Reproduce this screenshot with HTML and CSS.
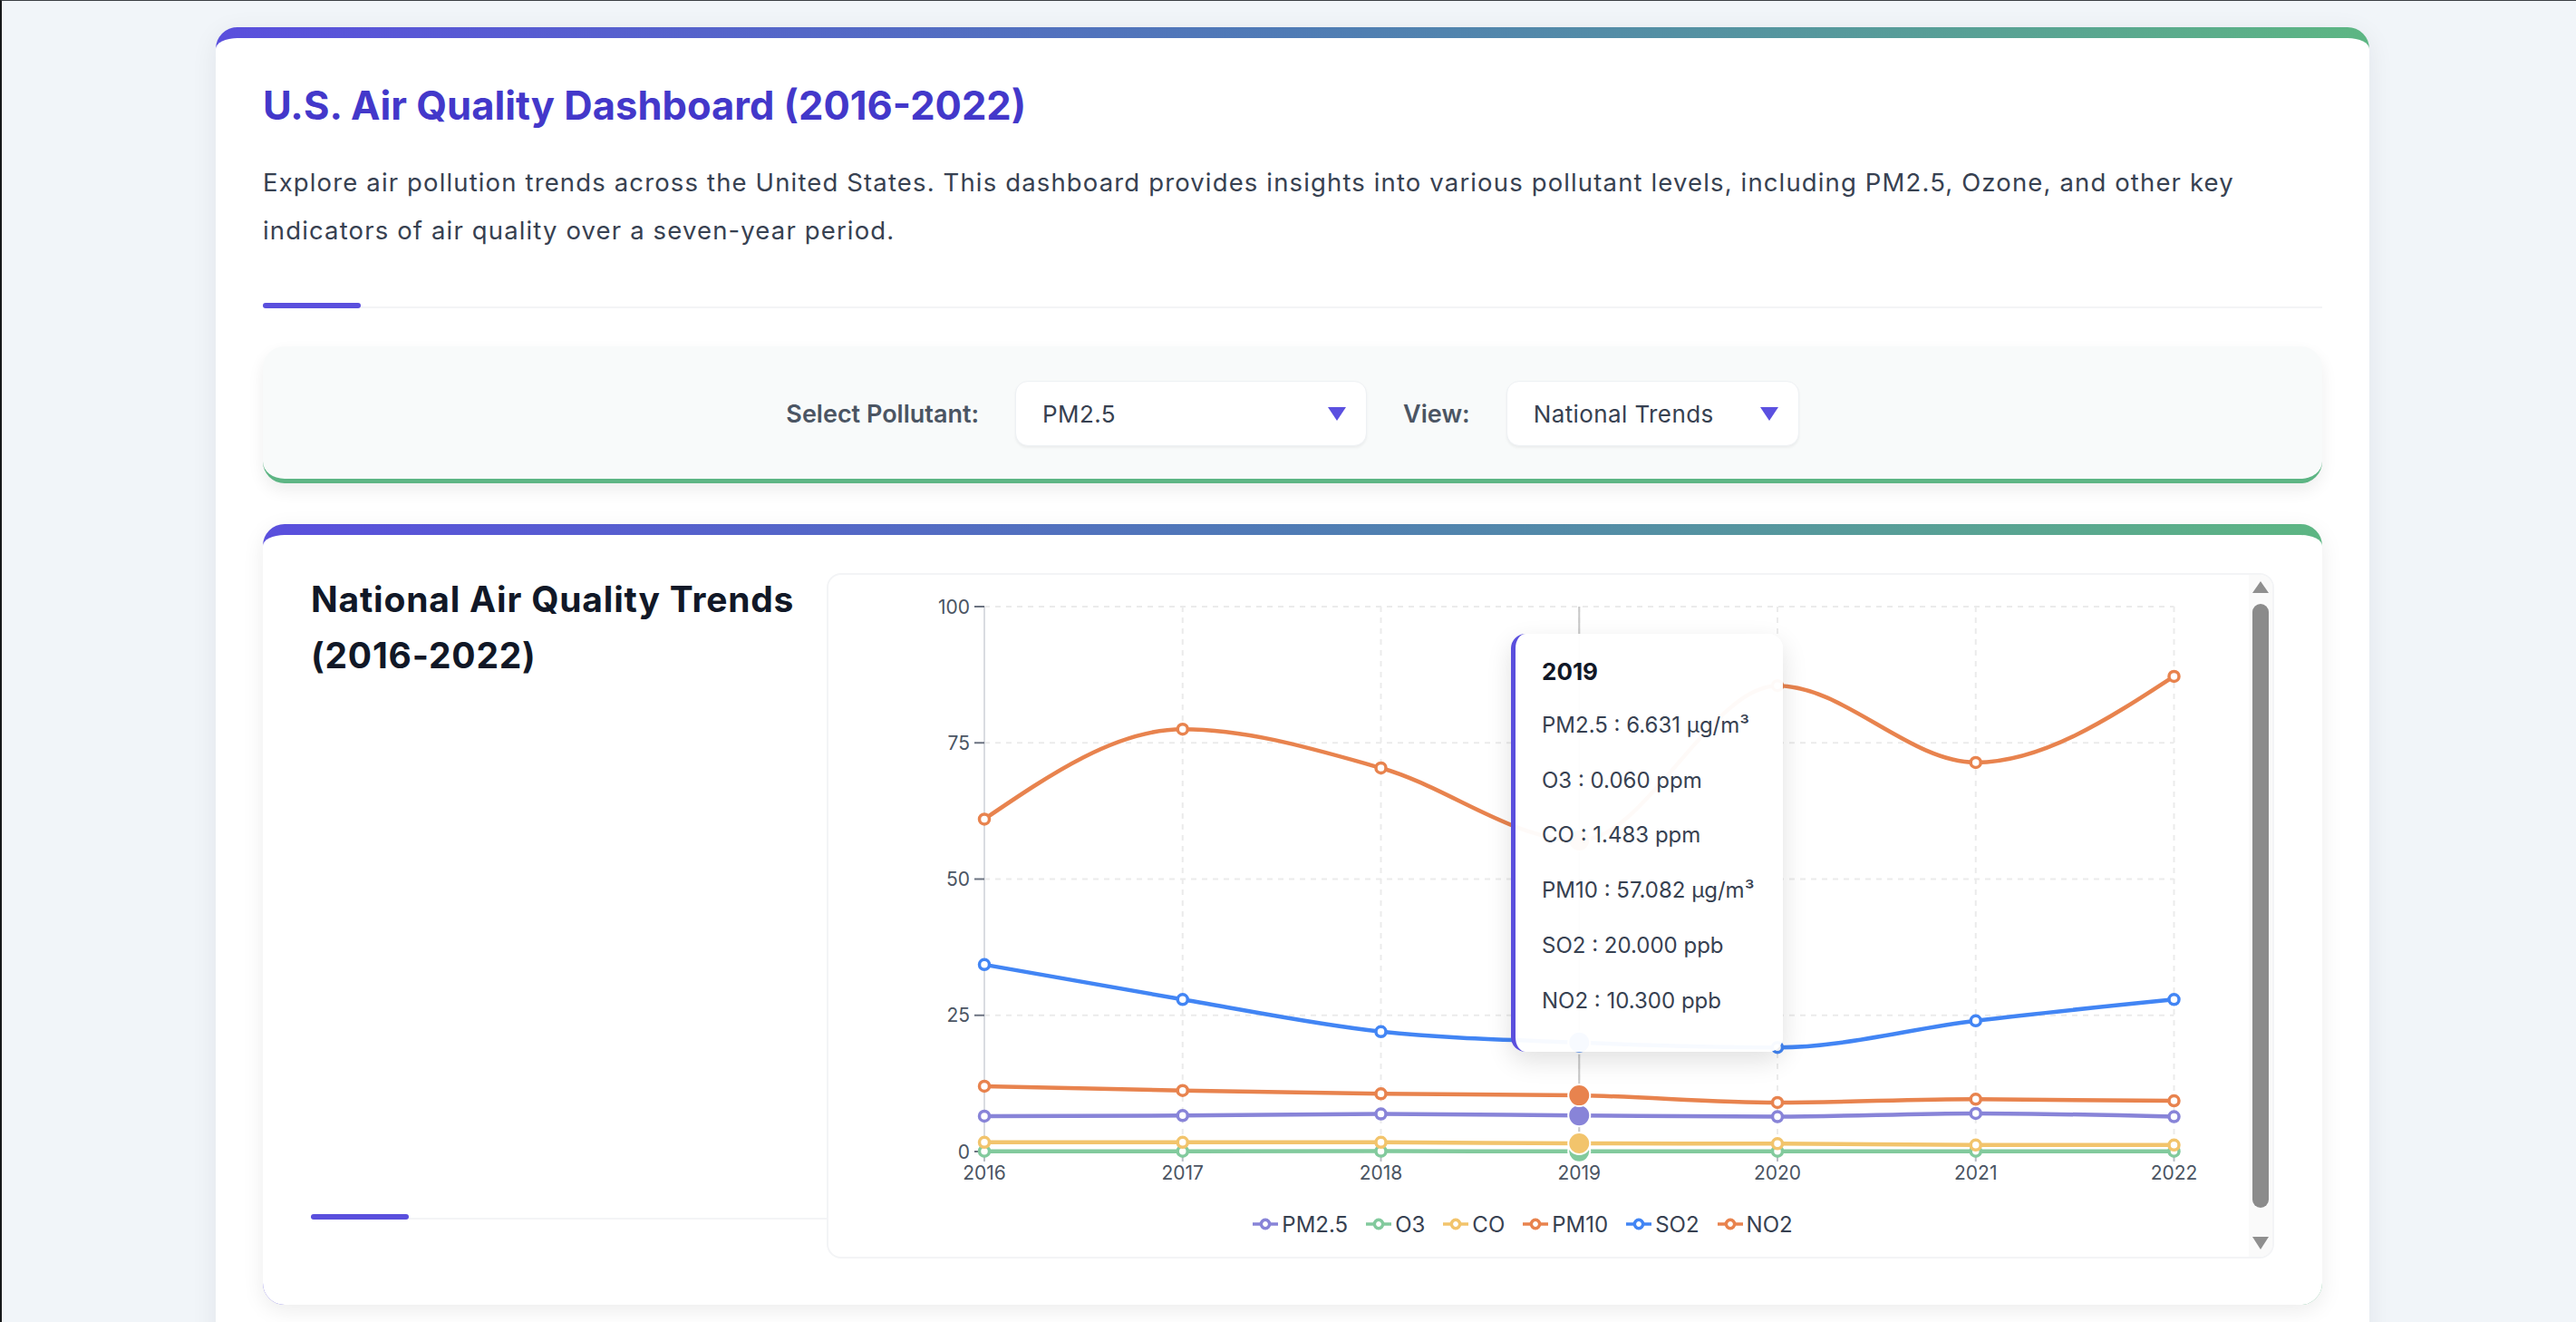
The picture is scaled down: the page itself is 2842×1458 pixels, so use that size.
FILE: index.html
```html
<!DOCTYPE html>
<html lang="en">
<head>
<meta charset="utf-8">
<title>U.S. Air Quality Dashboard (2016-2022)</title>
<link rel="stylesheet" href="styles.css">
</head>
<body>
<main class="page">
  <section class="dashboard">
    <h1 class="dash-title">U.S. Air Quality Dashboard (2016-2022)</h1>
    <p class="dash-intro">Explore air pollution trends across the United States. This dashboard provides insights into various pollutant levels, including PM2.5, Ozone, and other key<br>indicators of air quality over a seven-year period.</p>
    <div class="divider"><span class="divider-bar"></span><span class="divider-line"></span></div>

    <div class="controls">
      <span class="control-label">Select Pollutant:</span>
      <div class="select select-pollutant"><span>PM2.5</span><span class="caret"></span></div>
      <span class="control-label">View:</span>
      <div class="select select-view"><span>National Trends</span><span class="caret"></span></div>
    </div>

    <section class="chart-card">
      <div class="chart-side">
        <h2 class="chart-title">National Air Quality Trends (2016-2022)</h2>
        <div class="divider"><span class="divider-bar"></span><span class="divider-line"></span></div>
      </div>

      <div class="chart-box">
        <div class="chart-main">
          <svg class="chart-svg" width="1567" height="696" viewBox="0 0 1567 696">
            <g class="grid">
              <line x1="172" y1="35" x2="1484.5" y2="35"/>
              <line x1="172" y1="185.25" x2="1484.5" y2="185.25"/>
              <line x1="172" y1="335.5" x2="1484.5" y2="335.5"/>
              <line x1="172" y1="485.75" x2="1484.5" y2="485.75"/>
              <line x1="172" y1="636" x2="1484.5" y2="636"/>
              <line x1="172" y1="35" x2="172" y2="636"/>
              <line x1="390.75" y1="35" x2="390.75" y2="636"/>
              <line x1="609.5" y1="35" x2="609.5" y2="636"/>
              <line x1="828.25" y1="35" x2="828.25" y2="636"/>
              <line x1="1047" y1="35" x2="1047" y2="636"/>
              <line x1="1265.75" y1="35" x2="1265.75" y2="636"/>
              <line x1="1484.5" y1="35" x2="1484.5" y2="636"/>
            </g>
            <g class="axis-line">
              <line x1="172" y1="35" x2="172" y2="636"/>
              <line x1="172" y1="636" x2="1484.5" y2="636"/>
            </g>
            <g class="y-ticks">
              <line x1="161" y1="35" x2="172" y2="35"/>
              <line x1="161" y1="185.25" x2="172" y2="185.25"/>
              <line x1="161" y1="335.5" x2="172" y2="335.5"/>
              <line x1="161" y1="485.75" x2="172" y2="485.75"/>
              <line x1="161" y1="636" x2="172" y2="636"/>
            </g>
            <g class="x-ticks">
              <line x1="172" y1="636" x2="172" y2="647"/>
              <line x1="390.75" y1="636" x2="390.75" y2="647"/>
              <line x1="609.5" y1="636" x2="609.5" y2="647"/>
              <line x1="828.25" y1="636" x2="828.25" y2="647"/>
              <line x1="1047" y1="636" x2="1047" y2="647"/>
              <line x1="1265.75" y1="636" x2="1265.75" y2="647"/>
              <line x1="1484.5" y1="636" x2="1484.5" y2="647"/>
            </g>
            <g class="y-labels">
              <text x="156" y="42.5">100</text>
              <text x="156" y="192.75">75</text>
              <text x="156" y="343">50</text>
              <text x="156" y="493.25">25</text>
              <text x="156" y="643.5">0</text>
            </g>
            <g class="x-labels">
              <text x="172" y="667">2016</text>
              <text x="390.75" y="667">2017</text>
              <text x="609.5" y="667">2018</text>
              <text x="828.25" y="667">2019</text>
              <text x="1047" y="667">2020</text>
              <text x="1265.75" y="667">2021</text>
              <text x="1484.5" y="667">2022</text>
            </g>
            <line class="cursor" x1="828.25" y1="35" x2="828.25" y2="636"/>
            <g id="series"></g>
          </svg>

          <div class="legend">
            <span class="legend-item"><svg class="legend-icon" viewBox="0 0 32 32"><path stroke="#8884d8" d="M0,16h10.67A5.33,5.33,0,1,1,21.33,16H32M21.33,16A5.33,5.33,0,1,1,10.67,16"/></svg>PM2.5</span>
            <span class="legend-item"><svg class="legend-icon" viewBox="0 0 32 32"><path stroke="#82ca9d" d="M0,16h10.67A5.33,5.33,0,1,1,21.33,16H32M21.33,16A5.33,5.33,0,1,1,10.67,16"/></svg>O3</span>
            <span class="legend-item"><svg class="legend-icon" viewBox="0 0 32 32"><path stroke="#f2c46c" d="M0,16h10.67A5.33,5.33,0,1,1,21.33,16H32M21.33,16A5.33,5.33,0,1,1,10.67,16"/></svg>CO</span>
            <span class="legend-item"><svg class="legend-icon" viewBox="0 0 32 32"><path stroke="#e8834e" d="M0,16h10.67A5.33,5.33,0,1,1,21.33,16H32M21.33,16A5.33,5.33,0,1,1,10.67,16"/></svg>PM10</span>
            <span class="legend-item"><svg class="legend-icon" viewBox="0 0 32 32"><path stroke="#4285f4" d="M0,16h10.67A5.33,5.33,0,1,1,21.33,16H32M21.33,16A5.33,5.33,0,1,1,10.67,16"/></svg>SO2</span>
            <span class="legend-item"><svg class="legend-icon" viewBox="0 0 32 32"><path stroke="#e8834e" d="M0,16h10.67A5.33,5.33,0,1,1,21.33,16H32M21.33,16A5.33,5.33,0,1,1,10.67,16"/></svg>NO2</span>
          </div>
        </div>

        <div class="scrollbar">
          <span class="scroll-up"></span>
          <span class="scroll-thumb"></span>
          <span class="scroll-down"></span>
        </div>

        <div class="tooltip">
          <div class="tooltip-title">2019</div>
          <div class="tooltip-item">PM2.5 : 6.631 µg/m³</div>
          <div class="tooltip-item">O3 : 0.060 ppm</div>
          <div class="tooltip-item">CO : 1.483 ppm</div>
          <div class="tooltip-item">PM10 : 57.082 µg/m³</div>
          <div class="tooltip-item">SO2 : 20.000 ppb</div>
          <div class="tooltip-item">NO2 : 10.300 ppb</div>
        </div>
      </div>
    </section>
  </section>
</main>
<script src="script.js"></script>
</body>
</html>
```

FILE: styles.css
```css
* { box-sizing: border-box; }

html {
  background: #f1f5f9;
  border-top: 1px solid #3b4045;
  border-left: 2px solid #16181a;
}

body {
  margin: 0;
  background: #f1f5f9;
  font-family: Inter, "Noto Sans", "DejaVu Sans", sans-serif;
  color: #374151;
}

.page {
  width: 2376px;
  margin: 29px 0 0 236px;
}

.dashboard {
  border-top: 12px solid transparent;
  border-radius: 24px;
  background:
    linear-gradient(#ffffff, #ffffff) padding-box,
    linear-gradient(90deg, #5a4fdd, #4f7bb5 50%, #5db683) border-box;
  box-shadow: 0 6px 30px rgba(15, 23, 42, 0.07);
  padding: 46px 52px 200px;
}

.dash-title {
  margin: 0;
  font-size: 43.5px;
  line-height: 56px;
  font-weight: 700;
  color: #4338ca;
}

.dash-intro {
  margin: 31px 0 0;
  font-size: 27.5px;
  line-height: 53px;
  letter-spacing: 1.14px;
  color: #374151;
}

.divider {
  display: flex;
  align-items: flex-end;
  height: 6px;
  margin-top: 53px;
}

.divider-bar {
  flex: none;
  width: 108px;
  height: 6px;
  border-radius: 3px;
  background: #5a4fdd;
}

.divider-line {
  flex: 1;
  height: 2px;
  background: #f3f4f6;
}

.controls {
  margin-top: 42px;
  display: flex;
  justify-content: center;
  align-items: center;
  gap: 40px;
  padding: 38px 0 36px;
  background: #f8fafa;
  border-radius: 24px;
  border-bottom: 5px solid #5db584;
  box-shadow: 0 8px 18px rgba(0, 0, 0, 0.07);
}

.control-label {
  font-size: 27px;
  font-weight: 600;
  color: #4b5563;
}

.select {
  display: flex;
  align-items: center;
  justify-content: space-between;
  height: 72px;
  padding: 0 22px 0 29px;
  background: #ffffff;
  border: 1px solid #eef1f4;
  border-radius: 14px;
  box-shadow: 0 2px 3px rgba(0, 0, 0, 0.05);
  font-size: 26px;
  letter-spacing: 0.4px;
  color: #374151;
}

.select-pollutant { width: 388px; }
.select-view { width: 323px; }

.caret {
  width: 0;
  height: 0;
  border-left: 10px solid transparent;
  border-right: 10px solid transparent;
  border-top: 15px solid #5b50e0;
}

.chart-card {
  margin-top: 45px;
  display: grid;
  grid-template-columns: 569px 1fr;
  padding: 40px 53px 51px;
  border-top: 12px solid transparent;
  border-radius: 24px;
  background:
    linear-gradient(#ffffff, #ffffff) padding-box,
    linear-gradient(90deg, #5a4fdd, #4f7bb5 50%, #5db683) border-box;
  box-shadow: 0 6px 24px rgba(0, 0, 0, 0.08);
}

.chart-side {
  display: flex;
  flex-direction: column;
  justify-content: space-between;
  padding-bottom: 43px;
}

.chart-title {
  margin: 0;
  font-size: 39px;
  line-height: 62px;
  letter-spacing: 0.8px;
  font-weight: 700;
  color: #111827;
}

.chart-side .divider { margin-top: 0; }

.chart-box {
  position: relative;
  margin-top: 2px;
  height: 756px;
  display: flex;
  background: #ffffff;
  border: 2px solid #f3f4f6;
  border-radius: 16px;
}

.chart-main {
  flex: 1;
  display: flex;
  flex-direction: column;
}

.chart-svg { display: block; }

.grid line {
  stroke: #ebebeb;
  stroke-width: 2;
  stroke-dasharray: 6 6;
}

.axis-line line {
  stroke: #d9dce1;
  stroke-width: 2;
}

.y-ticks line {
  stroke: #6b7280;
  stroke-width: 2;
}

.x-ticks line {
  stroke: #b8bcc4;
  stroke-width: 2;
}

.y-labels text {
  font-family: Inter, "Noto Sans", sans-serif;
  font-size: 21px;
  fill: #4b5563;
  text-anchor: end;
}

.x-labels text {
  font-family: Inter, "Noto Sans", sans-serif;
  font-size: 21px;
  fill: #4b5563;
  text-anchor: middle;
}

.cursor {
  stroke: #c8c8c8;
  stroke-width: 2;
}

.legend {
  height: 40px;
  display: flex;
  justify-content: center;
  align-items: center;
  gap: 20px;
  padding-right: 35px;
  font-size: 24px;
  color: #374151;
}

.legend-item {
  display: inline-flex;
  align-items: center;
  gap: 4px;
}

.legend-icon {
  width: 28px;
  height: 28px;
}

.legend-icon path {
  fill: none;
  stroke-width: 4;
}

.scrollbar {
  flex: none;
  width: 26px;
  display: flex;
  flex-direction: column;
  align-items: center;
  padding-top: 7px;
  background: #fafafa;
  border-radius: 0 14px 14px 0;
}

.scroll-up {
  width: 0;
  height: 0;
  border-left: 9px solid transparent;
  border-right: 9px solid transparent;
  border-bottom: 13px solid #8f8f8f;
}

.scroll-thumb {
  margin-top: 12px;
  width: 18px;
  height: 666px;
  border-radius: 9px;
  background: #8b8b8b;
}

.scroll-down {
  margin-top: 32px;
  width: 0;
  height: 0;
  border-left: 9px solid transparent;
  border-right: 9px solid transparent;
  border-top: 14px solid #8f8f8f;
}

.tooltip {
  position: absolute;
  left: 753px;
  top: 65px;
  width: 300px;
  padding: 22px 20px 26px 29px;
  background: rgba(255, 255, 255, 0.96);
  border-left: 5px solid #5a4fdd;
  border-radius: 16px;
  box-shadow: 0 10px 28px rgba(0, 0, 0, 0.12);
}

.tooltip-title {
  font-size: 26px;
  line-height: 40px;
  font-weight: 700;
  color: #111827;
  margin-bottom: 9px;
}

.tooltip-item {
  font-size: 24px;
  line-height: 60.7px;
  color: #374151;
  white-space: nowrap;
}
```

FILE: script.js
```js
(function () {
  var X0 = 172, STEP = 218.75, Y0 = 636, K = 6.01;
  var series = [
    { color: '#8884d8', data: [6.5, 6.6, 6.9, 6.631, 6.4, 7.0, 6.4] },
    { color: '#82ca9d', data: [0.062, 0.061, 0.063, 0.06, 0.061, 0.062, 0.061] },
    { color: '#f2c46c', data: [1.7, 1.7, 1.7, 1.483, 1.45, 1.2, 1.2] },
    { color: '#e8834e', data: [61.0, 77.5, 70.4, 57.082, 85.5, 71.4, 87.2] },
    { color: '#4285f4', data: [34.3, 27.9, 22.0, 20.0, 19.1, 24.0, 27.9] },
    { color: '#e8834e', data: [12.0, 11.2, 10.6, 10.3, 9.0, 9.6, 9.3] }
  ];

  function sign(v) { return v < 0 ? -1 : (v > 0 ? 1 : 0); }

  function monotone(pts) {
    var n = pts.length, t = new Array(n), i;
    for (i = 1; i < n - 1; i++) {
      var h0 = pts[i].x - pts[i - 1].x, h1 = pts[i + 1].x - pts[i].x;
      var s0 = (pts[i].y - pts[i - 1].y) / h0, s1 = (pts[i + 1].y - pts[i].y) / h1;
      var p = (s0 * h1 + s1 * h0) / (h0 + h1);
      t[i] = (sign(s0) + sign(s1)) * Math.min(Math.abs(s0), Math.abs(s1), 0.5 * Math.abs(p)) || 0;
    }
    var hs = pts[1].x - pts[0].x;
    t[0] = (3 * (pts[1].y - pts[0].y) / hs - t[1]) / 2;
    var he = pts[n - 1].x - pts[n - 2].x;
    t[n - 1] = (3 * (pts[n - 1].y - pts[n - 2].y) / he - t[n - 2]) / 2;
    var d = 'M' + pts[0].x + ',' + pts[0].y;
    for (i = 0; i < n - 1; i++) {
      var dx = (pts[i + 1].x - pts[i].x) / 3;
      d += 'C' + (pts[i].x + dx) + ',' + (pts[i].y + dx * t[i]) + ',' +
        (pts[i + 1].x - dx) + ',' + (pts[i + 1].y - dx * t[i + 1]) + ',' +
        pts[i + 1].x + ',' + pts[i + 1].y;
    }
    return d;
  }

  var out = '';
  series.forEach(function (s) {
    var pts = s.data.map(function (v, i) { return { x: X0 + STEP * i, y: Y0 - K * v }; });
    out += '<path d="' + monotone(pts) + '" fill="none" stroke="' + s.color + '" stroke-width="4.5"/>';
    pts.forEach(function (p) {
      out += '<circle cx="' + p.x + '" cy="' + p.y + '" r="5.5" fill="#fff" stroke="' + s.color + '" stroke-width="3.5"/>';
    });
  });
  series.forEach(function (s) {
    out += '<circle cx="' + (X0 + STEP * 3) + '" cy="' + (Y0 - K * s.data[3]) + '" r="12" fill="' + s.color + '" stroke="#fff" stroke-width="2"/>';
  });
  document.getElementById('series').innerHTML = out;
})();
```
